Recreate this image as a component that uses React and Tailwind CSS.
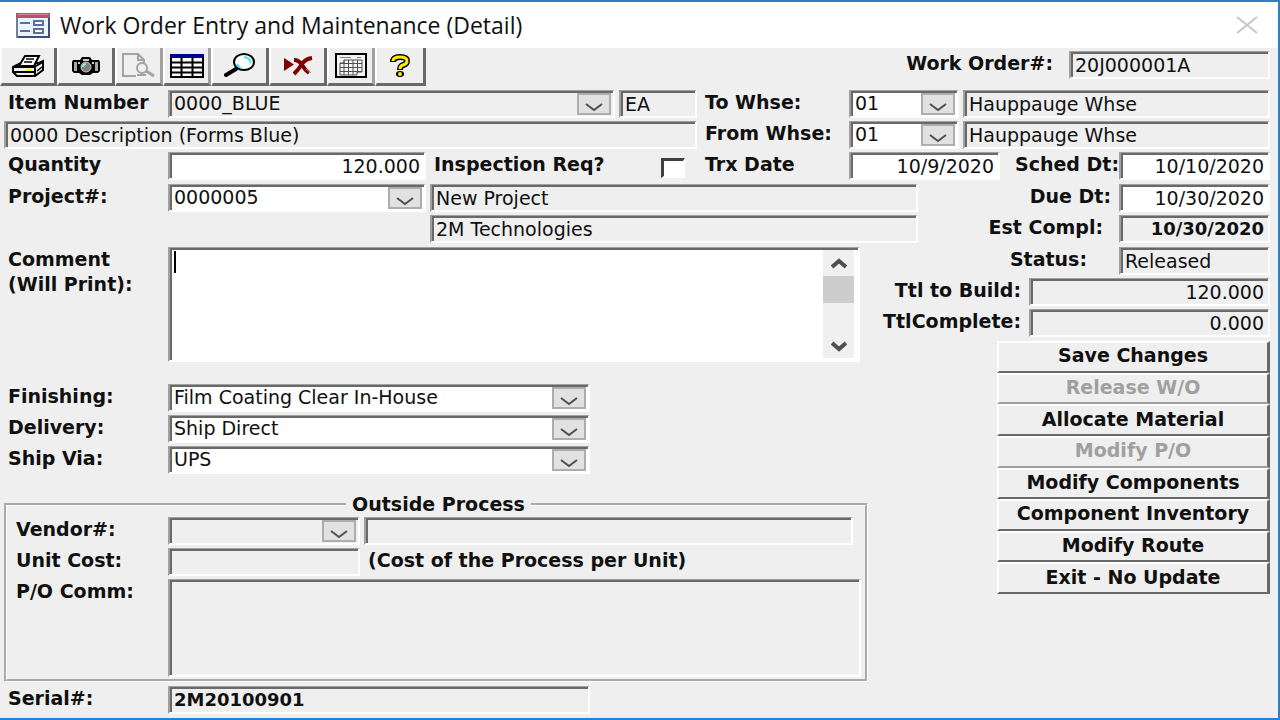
import { useState } from "react";

const sunken =
  "border-t border-l-2 border-b-2 border-r-2 border-t-[#a0a0a0] border-l-[#a0a0a0] border-b-white border-r-white shadow-[inset_2px_2px_0_#696969]";

const actions = [
  { label: "Save Changes" },
  { label: "Release W/O", disabled: true },
  { label: "Allocate Material" },
  { label: "Modify P/O", disabled: true },
  { label: "Modify Components" },
  { label: "Component Inventory" },
  { label: "Modify Route" },
  { label: "Exit - No Update" },
];

function Label({ htmlFor, className = "", children }) {
  return (
    <label
      htmlFor={htmlFor}
      className={`shrink-0 whitespace-nowrap font-bold leading-[25px] ${className}`}
    >
      {children}
    </label>
  );
}

function Field({ id, value = "", label, white, className = "", readOnly = true }) {
  return (
    <input
      id={id}
      type="text"
      aria-label={label}
      defaultValue={value}
      readOnly={readOnly}
      className={`block h-7 min-w-0 rounded-none pl-1 pr-1 outline-none ${sunken} ${
        white ? "bg-white" : "bg-[#efefef]"
      } ${className}`}
    />
  );
}

function Combo({ id, value = "", white, className = "" }) {
  return (
    <div className={`relative h-7 min-w-0 ${className}`}>
      <select
        id={id}
        defaultValue={value}
        className={`block h-full w-full appearance-none rounded-none pl-1 pr-10 outline-none ${sunken} ${
          white ? "bg-white" : "bg-[#efefef]"
        }`}
      >
        <option value={value}>{value}</option>
      </select>
      <span className="pointer-events-none absolute right-1 top-[3px] flex h-[22px] w-[34px] items-end justify-center border-2 border-[#adadad] bg-[#e1e1e1]">
        <svg width="18" height="12" viewBox="0 0 18 12" fill="none" stroke="#505050" strokeWidth="2">
          <path d="M1 3l8 6 8-6" />
        </svg>
      </span>
    </div>
  );
}

function FormIcon() {
  return (
    <svg width="34" height="25" viewBox="0 0 34 25">
      <rect x="1" y="1" width="32" height="23" fill="#eef3fb" stroke="#6e7fa5" strokeWidth="2" />
      <rect x="0" y="0" width="34" height="5" fill="#b9506f" />
      <rect x="2" y="1" width="30" height="1" fill="#d98ba0" />
      <path d="M4 10h10M4 18h10" stroke="#5a6f9c" strokeWidth="2" />
      <rect x="18" y="8" width="9" height="4" fill="#fff" stroke="#5a6f9c" strokeWidth="2" />
      <rect x="18" y="16" width="9" height="4" fill="#fff" stroke="#5a6f9c" strokeWidth="2" />
      <path d="M33 5v19H2" fill="none" stroke="#3c4f7c" strokeWidth="2" />
    </svg>
  );
}

function PrinterIcon() {
  return (
    <svg width="34" height="24" viewBox="0 0 34 24">
      <path d="M2 13l8-4h18l4-2v9l-8 6H6l-4-4z" fill="#efefef" stroke="#000" strokeWidth="2" />
      <path d="M8 12L14 2h14l-5 10z" fill="#fff" stroke="#000" strokeWidth="2" />
      <path d="M15 5h8M13 8h8" stroke="#000" strokeWidth="1.5" />
      <path d="M2 13h21l9-5M24 13v9M2 18h22" fill="none" stroke="#000" strokeWidth="2" />
      <path d="M26 17l5-4" stroke="#000" strokeWidth="1.5" />
      <rect x="15" y="15" width="6" height="2" fill="#ffff00" />
    </svg>
  );
}

function CameraIcon() {
  return (
    <svg width="30" height="20" viewBox="0 0 30 20">
      <path d="M2 4h7l2-3h8l2 3h7l1 2v9l-2 2h-5l-3 2h-8l-3-2H3l-2-2V6z" fill="#000" />
      <path d="M4.500 6v9M25.500 6v9" stroke="#a8a8a8" strokeWidth="3" />
      <path d="M8 6v2M22 6v2" stroke="#d0d0d0" strokeWidth="2" />
      <path d="M12 3h6v2h-6z" fill="#c8c8c8" />
      <circle cx="15" cy="11" r="5" fill="#808080" stroke="#c8c8c8" strokeWidth="1" />
      <path d="M12 11a3 3 0 0 1 3-3" fill="none" stroke="#7ff0f0" strokeWidth="2" />
    </svg>
  );
}

function PreviewIcon() {
  return (
    <svg width="34" height="25" viewBox="0 0 34 25" fill="none" stroke="#a3a3a3" strokeWidth="2">
      <path d="M14 23H1V1h15l6 6v3" />
      <path d="M16 1v6h6" />
      <circle cx="20" cy="15" r="5" fill="#efefef" />
      <path d="M24 18l8 5" strokeWidth="3" />
      <path d="M15 22h9" />
    </svg>
  );
}

function TableIcon() {
  return (
    <svg width="34" height="24" viewBox="0 0 34 24">
      <rect x="1" y="1" width="32" height="22" fill="#fff" stroke="#000" strokeWidth="2" />
      <path d="M11.500 3v20M22.500 3v20M1 8.500h32M1 13.500h32M1 18.500h32" stroke="#000" strokeWidth="2" />
      <rect x="0" y="0" width="34" height="4" fill="#000090" />
    </svg>
  );
}

function MagnifierIcon() {
  return (
    <svg width="32" height="25" viewBox="0 0 32 25" fill="none">
      <ellipse cx="20" cy="9" rx="10" ry="8" fill="#fff" stroke="#000" strokeWidth="2" />
      <path d="M20 4q6 1 7 6M13 11q1 3 4 4" stroke="#3fe8f0" strokeWidth="2" />
      <path d="M12 16L2 22" stroke="#000" strokeWidth="4" strokeLinecap="round" />
    </svg>
  );
}

function DeleteIcon() {
  return (
    <svg width="30" height="20" viewBox="0 0 30 20">
      <path d="M1 2v13l10-6.500z" fill="#7e0000" />
      <path d="M11 4q5 0 8 5t7 8" fill="none" stroke="#7e0000" strokeWidth="4" />
      <path d="M29 2q-7 1-10 6t-8 10" fill="none" stroke="#7e0000" strokeWidth="4" />
      <path d="M23 13l5 4" stroke="#a0a0a0" strokeWidth="1" />
    </svg>
  );
}

function CalendarIcon() {
  return (
    <svg width="32" height="25" viewBox="0 0 32 25" fill="none">
      <rect x="1" y="1" width="30" height="23" fill="#f4f4f4" stroke="#000" strokeWidth="2" />
      <path d="M5 4.500h11M22 4.500h4" stroke="#808080" strokeWidth="1" />
      <path
        d="M9 7h18v12h-5v3H5V10h4zM5 10.500h22M5 14.500h22M5 18.500h22M9 7v15M13.500 7v15M18 7v15M22.500 7v13"
        stroke="#505050"
        strokeWidth="1"
      />
    </svg>
  );
}

function HelpIcon() {
  return (
    <svg width="22" height="24" viewBox="0 0 22 24" fill="none">
      <path d="M4 8q0-5 7-5t7 4q0 3-4 4-3 1-3 5" stroke="#000" strokeWidth="6" />
      <ellipse cx="11" cy="20" rx="4" ry="3" fill="#000" />
      <path d="M4 7q0-4 7-4t7 4q0 3-4 4-3 1-3 4" stroke="#ffeb00" strokeWidth="3" />
      <ellipse cx="11" cy="20" rx="2" ry="2" fill="#ffeb00" />
    </svg>
  );
}

const tools = [
  { name: "Print", icon: <PrinterIcon />, className: "w-[57px] border-r-[#696969]" },
  { name: "Snapshot", icon: <CameraIcon />, className: "w-[58px] border-r-[#696969]" },
  { name: "Preview", icon: <PreviewIcon />, className: "w-12 border-r-[#a0a0a0]" },
  { name: "Datasheet", icon: <TableIcon />, className: "w-12 border-r-[#a0a0a0]" },
  { name: "Find", icon: <MagnifierIcon />, className: "w-[58px] border-r-[#696969]" },
  { name: "Delete", icon: <DeleteIcon />, className: "w-[58px] border-r-[#696969]" },
  { name: "Calendar", icon: <CalendarIcon />, className: "w-12 border-r-[#a0a0a0]" },
  { name: "Help", icon: <HelpIcon />, className: "w-[51px] border-r-[#696969]" },
];

export default function App() {
  const [inspection, setInspection] = useState(false);

  return (
    <div className="flex min-h-screen flex-col border-b-2 border-r-2 border-t-2 border-[#2b80cc] bg-[#efefef] font-['DejaVu_Sans',sans-serif] text-[19px] leading-[25px] text-[#101010]">
      {/* TITLE BAR */}
      <header className="flex h-[46px] items-center bg-white pl-4 pr-5">
        <FormIcon />
        <h1 className="ml-[10px] font-['Open_Sans',sans-serif] text-[23px]">
          Work Order Entry and Maintenance (Detail)
        </h1>
        <button aria-label="Close" className="ml-auto">
          <svg width="22" height="18" viewBox="0 0 22 18" stroke="#c6c6c6" strokeWidth="2">
            <path d="M1 1l20 16M21 1L1 17" />
          </svg>
        </button>
      </header>

      {/* TOOLBAR */}
      <div className="flex h-[42px] items-start justify-between pr-2">
        <div className="flex">
          {tools.map((tool) => (
            <button
              key={tool.name}
              aria-label={tool.name}
              className={`flex h-[38px] items-center justify-center border-b-[3px] border-l-2 border-r-[3px] border-b-[#696969] border-l-white ${tool.className}`}
            >
              {tool.icon}
            </button>
          ))}
        </div>
        <div className="flex pt-[3px]">
          <Label htmlFor="workOrder" className="pr-4">
            Work Order#:
          </Label>
          <Field id="workOrder" value="20J000001A" className="w-[201px]" />
        </div>
      </div>

      <main className="flex flex-col pb-1 pl-1 pr-2">
        {/* ITEM AND WAREHOUSES */}
        <div className="flex gap-2">
          <div className="flex min-w-0 flex-1 flex-col gap-[3px]">
            <div className="flex">
              <Label htmlFor="item" className="w-[164px] pl-1">
                Item Number
              </Label>
              <Combo id="item" value="0000_BLUE" className="flex-1" />
              <Field label="Unit of measure" value="EA" className="ml-1 w-[78px]" />
            </div>
            <Field label="Description" value="0000 Description (Forms Blue)" className="w-full" />
            <div className="flex">
              <Label htmlFor="quantity" className="w-[164px] pl-1">
                Quantity
              </Label>
              <Field id="quantity" value="120.000" white readOnly={false} className="w-[258px] text-right" />
              <Label htmlFor="inspection" className="flex-1 pl-2">
                Inspection Req?
              </Label>
              <input
                id="inspection"
                type="checkbox"
                checked={inspection}
                onChange={() => setInspection(!inspection)}
                className="mr-3 mt-[6px] h-5 w-6 appearance-none border-b-2 border-l-[3px] border-r-2 border-t-[3px] border-b-white border-l-[#404040] border-r-white border-t-[#404040] bg-white checked:bg-[#404040]"
              />
            </div>
          </div>

          <div className="flex w-[565px] shrink-0 flex-col gap-[3px]">
            <div className="flex">
              <Label htmlFor="toWhse" className="w-36">
                To Whse:
              </Label>
              <Combo id="toWhse" value="01" white className="w-[110px]" />
              <Field label="To warehouse name" value="Hauppauge Whse" className="ml-1 flex-1" />
            </div>
            <div className="flex">
              <Label htmlFor="fromWhse" className="w-36">
                From Whse:
              </Label>
              <Combo id="fromWhse" value="01" white className="w-[110px]" />
              <Field label="From warehouse name" value="Hauppauge Whse" className="ml-1 flex-1" />
            </div>
            <div className="flex">
              <Label htmlFor="trxDate" className="w-36">
                Trx Date
              </Label>
              <Field id="trxDate" value="10/9/2020" white readOnly={false} className="w-[151px] text-right" />
              <Label htmlFor="schedDate" className="flex-1 text-right">
                Sched Dt:
              </Label>
              <Field id="schedDate" value="10/10/2020" white readOnly={false} className="w-[151px] text-right" />
            </div>
          </div>
        </div>

        {/* PROJECT */}
        <div className="mt-1 flex">
          <Label htmlFor="project" className="w-[164px] pl-1">
            Project#:
          </Label>
          <Combo id="project" value="0000005" white className="w-[258px]" />
          <Field label="Project name" value="New Project" className="ml-1 flex-1" />
          <Label htmlFor="dueDate" className="w-[201px] pr-2 text-right">
            Due Dt:
          </Label>
          <Field id="dueDate" value="10/30/2020" white readOnly={false} className="w-[151px] text-right" />
        </div>
        <div className="mt-[3px] flex pl-[426px]">
          <Field label="Customer" value="2M Technologies" className="flex-1" />
          <Label htmlFor="estCompl" className="w-[201px] pr-4 text-right">
            Est Compl:
          </Label>
          <Field id="estCompl" value="10/30/2020" className="w-[151px] text-right text-lg font-bold" />
        </div>

        <div className="mt-1 flex gap-2">
          <div className="flex min-w-0 flex-1 flex-col">
            {/* COMMENT */}
            <div className="flex pr-2">
              <Label htmlFor="comment" className="w-[164px] pl-1">
                Comment
                <br />
                (Will Print):
              </Label>
              <div className={`relative flex h-[115px] flex-1 bg-white py-[2px] pl-[2px] pr-1 ${sunken}`}>
                <textarea id="comment" className="block h-full min-w-0 flex-1 resize-none px-1 outline-none" />
                <span className="absolute left-1 top-[3px] h-[22px] w-[2px] bg-black" />
                <div className="flex w-[31px] flex-col items-center bg-[#f0f0f0]">
                  <svg width="16" height="26" viewBox="0 0 16 26" fill="none" stroke="#505050" strokeWidth="4">
                    <path d="M1 17l7-6 7 6" />
                  </svg>
                  <span className="h-[27px] w-full bg-[#cdcdcd]" />
                  <svg width="16" height="26" viewBox="0 0 16 26" fill="none" stroke="#505050" strokeWidth="4" className="mt-auto">
                    <path d="M1 11l7 6 7-6" />
                  </svg>
                </div>
              </div>
            </div>

            <div className="mt-[22px] flex flex-col gap-[3px]">
              <div className="flex">
                <Label htmlFor="finishing" className="w-[164px] pl-1">
                  Finishing:
                </Label>
                <Combo id="finishing" value="Film Coating Clear In-House" white className="w-[422px]" />
              </div>
              <div className="flex">
                <Label htmlFor="delivery" className="w-[164px] pl-1">
                  Delivery:
                </Label>
                <Combo id="delivery" value="Ship Direct" white className="w-[422px]" />
              </div>
              <div className="flex">
                <Label htmlFor="shipVia" className="w-[164px] pl-1">
                  Ship Via:
                </Label>
                <Combo id="shipVia" value="UPS" white className="w-[422px]" />
              </div>
            </div>

            {/* OUTSIDE PROCESS */}
            <fieldset className="mt-[18px] flex flex-col border-[3px] border-white pb-[2px] pl-[9px] pr-1 [border-style:groove]">
              <legend className="mx-auto px-[6px] font-bold leading-[25px]">Outside Process</legend>
              <div className="flex flex-col gap-[3px]">
                <div className="flex pr-2">
                  <Label htmlFor="vendor" className="w-[152px]">
                    Vendor#:
                  </Label>
                  <Combo id="vendor" className="w-[192px]" />
                  <Field label="Vendor name" className="ml-1 flex-1" />
                </div>
                <div className="flex">
                  <Label htmlFor="unitCost" className="w-[152px]">
                    Unit Cost:
                  </Label>
                  <Field id="unitCost" className="w-[192px]" />
                  <span className="pl-2 font-bold">(Cost of the Process per Unit)</span>
                </div>
                <div className="flex">
                  <Label htmlFor="poComm" className="w-[152px]">
                    P/O Comm:
                  </Label>
                  <textarea id="poComm" className={`block h-[98px] min-w-0 flex-1 resize-none px-1 outline-none ${sunken}`} />
                </div>
              </div>
            </fieldset>

            <div className="mt-1 flex">
              <Label htmlFor="serial" className="w-[164px] pl-1">
                Serial#:
              </Label>
              <Field id="serial" value="2M20100901" className="w-[422px] text-lg font-bold" />
            </div>
          </div>

          {/* STATUS AND ACTIONS */}
          <div className="flex w-[394px] shrink-0 flex-col">
            <div className="flex flex-col gap-[3px]">
              <div className="flex justify-end">
                <Label htmlFor="status" className="pr-8">
                  Status:
                </Label>
                <Field id="status" value="Released" className="w-[151px]" />
              </div>
              <div className="flex justify-end">
                <Label htmlFor="ttlBuild" className="pr-2">
                  Ttl to Build:
                </Label>
                <Field id="ttlBuild" value="120.000" className="w-[241px] text-right" />
              </div>
              <div className="flex justify-end">
                <Label htmlFor="ttlComplete" className="pr-2">
                  TtlComplete:
                </Label>
                <Field id="ttlComplete" value="0.000" className="w-[241px] text-right" />
              </div>
            </div>
            <div className="ml-auto mt-1 grid h-[253px] w-[273px] auto-rows-fr">
              {actions.map((action) => (
                <button
                  key={action.label}
                  disabled={action.disabled}
                  className="border-b-2 border-l-2 border-r-[3px] border-t-2 border-b-[#696969] border-l-white border-r-[#696969] border-t-white pb-[2px] font-bold leading-[25px] disabled:border-b-[#a0a0a0] disabled:text-[#a0a0a0]"
                >
                  {action.label}
                </button>
              ))}
            </div>
          </div>
        </div>
      </main>
    </div>
  );
}
